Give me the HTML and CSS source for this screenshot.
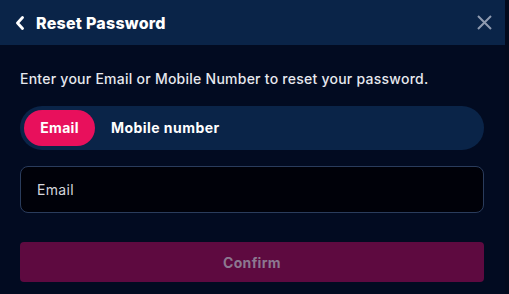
FILE: index.html
```html
<!DOCTYPE html>
<html>
<head>
<meta charset="utf-8">
<link rel="stylesheet" href="styles.css">
</head>
<body>
<div class="dialog">
  <header class="head">
    <button class="back" aria-label="Back">
      <svg width="10" height="14" viewBox="0 0 10 14"><path d="M7.5 1.5 L2.5 7 L7.5 12.5" fill="none" stroke="#fff" stroke-width="2.8" stroke-linecap="round" stroke-linejoin="round"/></svg>
    </button>
    <h1 class="title">Reset Password</h1>
    <button class="close" aria-label="Close">
      <svg width="15" height="15" viewBox="0 0 15 15"><path d="M1 1 L14 14 M14 1 L1 14" fill="none" stroke="#8f9bb0" stroke-width="2"/></svg>
    </button>
  </header>
  <main class="body">
    <p class="desc">Enter your Email or Mobile Number to reset your password.</p>
    <div class="tabs">
      <span class="tab active">Email</span>
      <span class="tab">Mobile number</span>
    </div>
    <div class="field"><span class="placeholder">Email</span></div>
    <button class="confirm">Confirm</button>
  </main>
</div>
</body>
</html>
```
FILE: styles.css
```css
html, body {
  margin: 0;
  padding: 0;
  background: #030a1d;
  height: 100%;
}
body {
  font-family: Inter, "Noto Sans", sans-serif;
  overflow: hidden;
}
.dialog {
  width: 505px;
  height: 294px;
  background: #020b21;
  display: flex;
  flex-direction: column;
}
.head {
  height: 45px;
  background: #0a2448;
  display: flex;
  align-items: center;
  padding: 0 13px 0 15px;
  box-sizing: border-box;
}
.back, .close {
  background: none;
  border: 0;
  padding: 0;
  display: flex;
  align-items: center;
  cursor: pointer;
}
.back { width: 21px; }
.title {
  margin: 0;
  flex: 1;
  color: #fff;
  font-size: 16px;
  font-weight: 800;
  letter-spacing: 0.25px;
}
.body {
  padding: 0 21px 0 20px;
  display: flex;
  flex-direction: column;
}
.desc {
  margin: 24px 0 0;
  height: 20px;
  line-height: 20px;
  color: #e6e8ee;
  font-size: 14px;
  font-weight: 500;
  letter-spacing: 0.25px;
}
.tabs {
  margin-top: 17px;
  height: 44px;
  border-radius: 22px;
  background: #0a2448;
  display: flex;
  align-items: center;
  padding: 0 4px;
  box-sizing: border-box;
  gap: 16px;
}
.tab {
  color: #fff;
  font-size: 14px;
  font-weight: 700;
  line-height: 36px;
  letter-spacing: 0.45px;
}
.tab.active {
  background: #e8105c;
  border-radius: 18px;
  width: 71px;
  text-align: center;
  letter-spacing: 0.3px;
}
.field {
  margin-top: 16px;
  height: 47px;
  box-sizing: border-box;
  border: 1px solid #2a3c5c;
  border-radius: 8px;
  background: #000109;
  display: flex;
  align-items: center;
  padding-left: 16px;
}
.placeholder {
  color: #d4d6dc;
  font-size: 14px;
  letter-spacing: 0.3px;
}
.confirm {
  margin-top: 29px;
  height: 40px;
  border: 0;
  border-radius: 4px;
  background: #5e0a40;
  color: #8c7890;
  font-family: inherit;
  font-size: 14px;
  font-weight: 700;
  letter-spacing: 0.3px;
}
```
